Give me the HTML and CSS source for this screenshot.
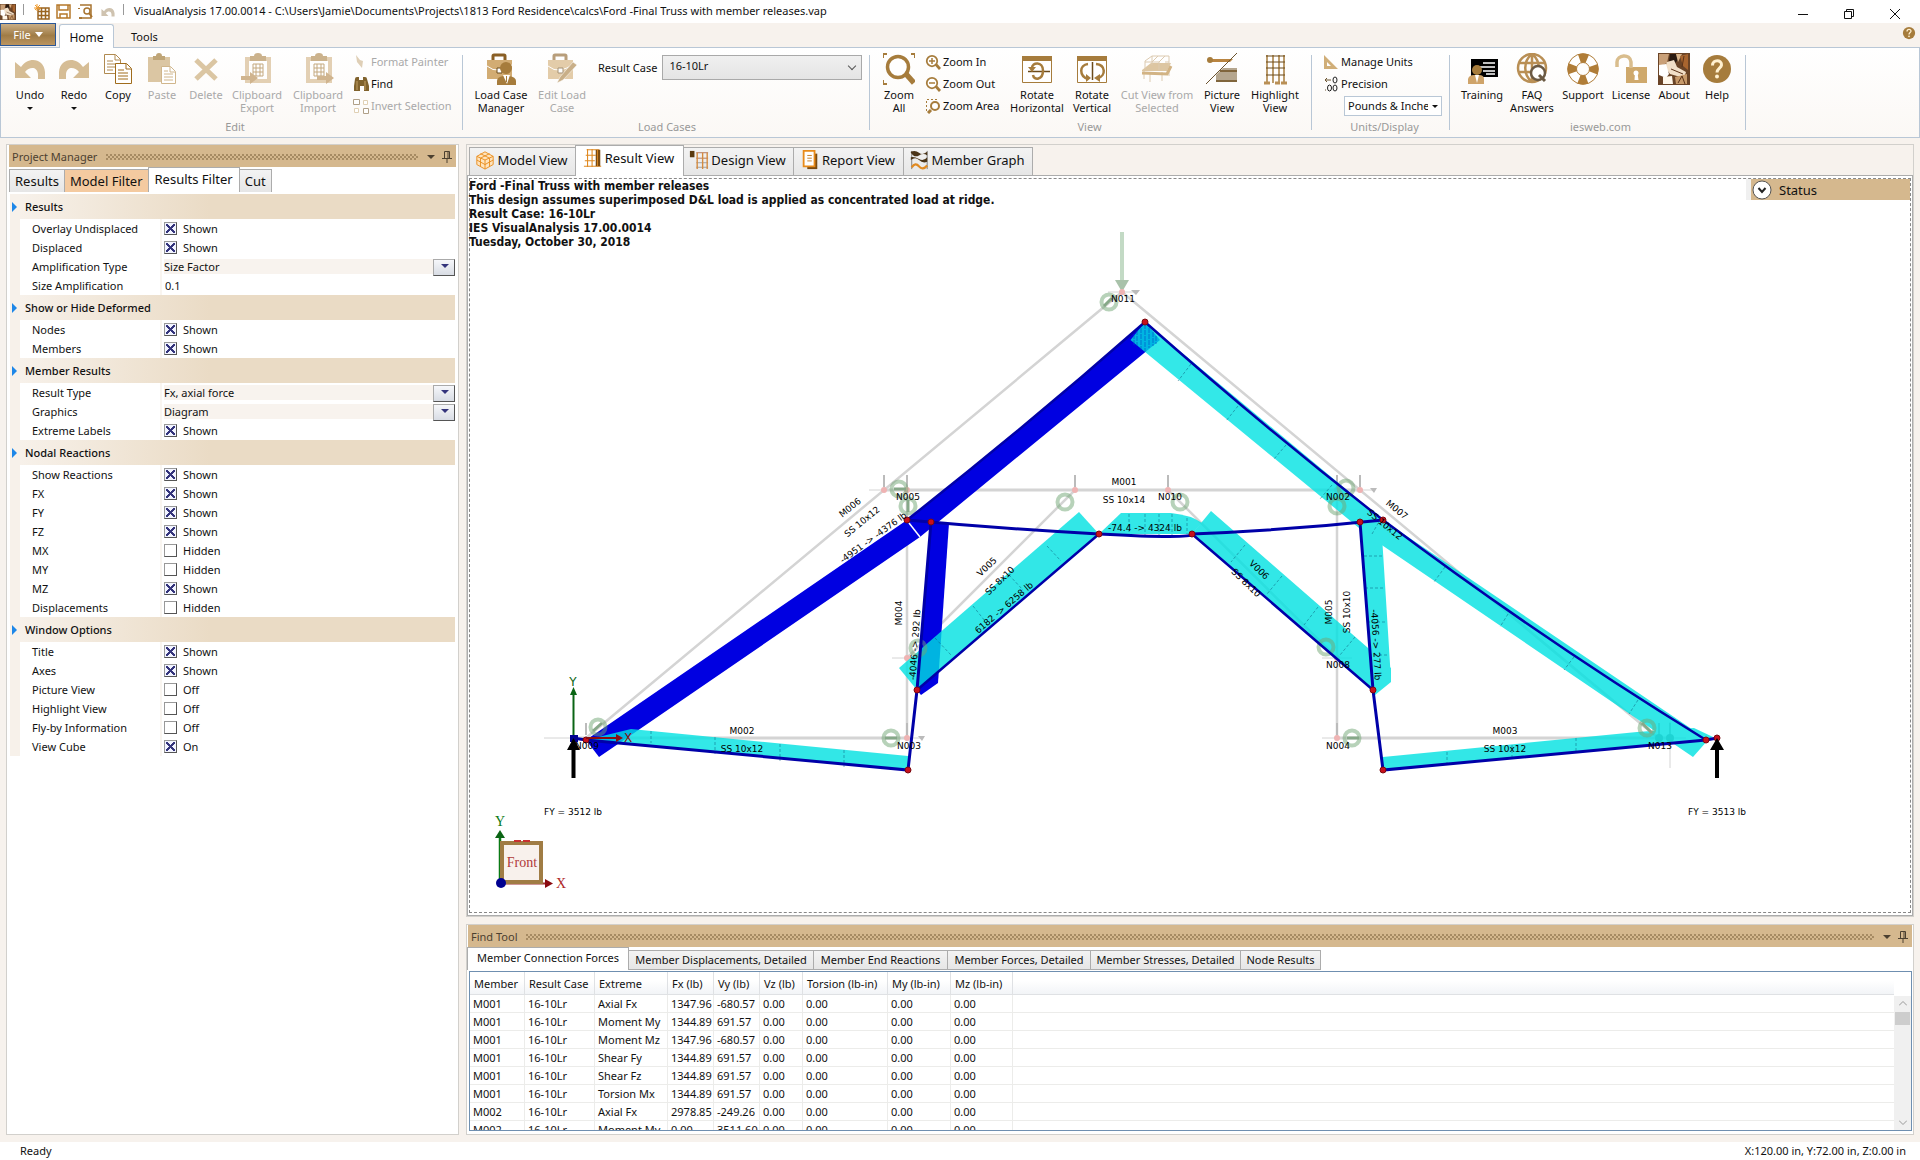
FILE: index.html
```html
<!DOCTYPE html>
<html lang="en">
<head>
<meta charset="utf-8">
<title>VisualAnalysis 17.00.0014</title>
<link rel="stylesheet" href="styles.css">
</head>
<body>
<svg class="defs" aria-hidden="true">
  <defs>
    <symbol id="i-undo" viewBox="0 0 32 32"><path d="M1 9v16h16l-6-6c4-5 12-6 13 2v5h7v-7C30 5 14 3 7 14z"/></symbol>
    <symbol id="i-clip" viewBox="0 0 32 32"><path d="M4 4h26v26H4z" fill="#d6b98e"/><path d="M8 8h18v18H8z" fill="#fff"/><path d="M9 3h4a4 3 0 0 1 8 0h4v5H9z" fill="#b08a50"/><path d="M12 11h10v12H12zM15 11v12M19 11v12M12 15h10M12 19h10" fill="none" stroke="#a67c3c"/></symbol>
    <symbol id="i-case" viewBox="0 0 32 32"><path d="M8 7V3q0-1 1-1h10q1 0 1 1v4" fill="none" stroke="#8a5f25" stroke-width="3"/><path d="M2 7h25v19H2z" fill="#d2ac73"/><path d="M2 13q6 5 12 4t13-5" fill="none" stroke="#fff"/><path d="M12 15h5v5h-5z" fill="#fff" stroke="#6b4a1a"/></symbol>
    <symbol id="i-mag" viewBox="0 0 32 32"><circle cx="14" cy="14" r="10.500" fill="#fff" stroke="#a67c3c" stroke-width="3.500"/><path d="M22 21l8 9" stroke="#a67c3c" stroke-width="5.500"/></symbol>
    <symbol id="i-help" viewBox="0 0 32 32"><circle cx="16" cy="16" r="14" fill="#a67c3c"/><path d="M11.500 12.500C11.500 6 21 6.500 20.500 12c-.3 3-4.500 3.500-4.500 7.500" fill="none" stroke="#fff0cf" stroke-width="3"/><circle cx="16" cy="23.500" r="2" fill="#fff0cf"/></symbol>
    <symbol id="i-pin" viewBox="0 0 10 12"><path d="M2.500 7V.5h5V7M6 1v6M0 7.500h10M5 8v4" fill="none" stroke="#4c4030"/></symbol>
    <symbol id="i-photo" viewBox="0 0 32 32"><path d="M0 0h32v32H0z" fill="#6a4427"/><path d="M1 1h10l-2 9-8 4z" fill="#c9a078"/><path d="M12 1h6l2 6-4 4-5-3z" fill="#2a1a10"/><path d="M18 1h6l-4 8z" fill="#d9b48a"/><path d="M9 9l7-2 3 7 9 5-2 6-14-4-5-7z" fill="#f1dfc8"/><path d="M1 12l7-1 3 10-3 4-7-3z" fill="#fff"/><path d="M22 3l8-2v16l-5-4z" fill="#a8652f"/><path d="M5 24l9-1 1 8H5z" fill="#fff7ea"/><path d="M17 24l12-3v10H18z" fill="#c79a6a"/><path d="M20 30l4-7 3 8M13 16l12 5M26 3l-2 11" stroke="#5a3218" fill="none"/></symbol>
  </defs>
</svg>

<header class="titlebar">
  <svg class="app-icon"><use href="#i-photo"/></svg>
  <span class="tick"></span>
  <svg width="16" height="16" viewBox="0 0 16 16"><path d="M4 4h11v11H4zM7.500 4v11M11.500 4v11M4 7.500h11M4 11.500h11" fill="none" stroke="#9a6420" stroke-width="1.500"/><path d="M0 4h7M3 0v7M1 1l5 5M6 1L1 6" stroke="#f09a2c"/></svg>
  <svg width="16" height="16" viewBox="0 0 16 16"><path d="M1 1h13v13H1zM3 1v5h9V1M4 14v-4h7v4" fill="none" stroke="#b5782a" stroke-width="1.500"/></svg>
  <svg width="16" height="16" viewBox="0 0 16 16"><path d="M2 1h11v13H2" fill="none" stroke="#a87430" stroke-width="1.500"/><circle cx="9" cy="7" r="3" fill="#fff" stroke="#a87430" stroke-width="1.500"/><path d="M11 9l3 4M1 4v1M1 14h3" stroke="#a87430" stroke-width="2"/></svg>
  <svg class="faded" width="16" height="14"><use href="#i-undo"/></svg>
  <span class="tick"></span>
  <h1>VisualAnalysis 17.00.0014 - C:\Users\Jamie\Documents\Projects\1813 Ford Residence\calcs\Ford -Final Truss with member releases.vap</h1>
  <div class="win">
    <button aria-label="Minimize"><svg width="10" height="10" viewBox="0 0 10 10"><path d="M0 5.500h10"/></svg></button>
    <button aria-label="Restore"><svg width="10" height="10" viewBox="0 0 10 10"><path d="M.5 2.500h7v7h-7zM2.500 2V.5h7v7H8"/></svg></button>
    <button aria-label="Close"><svg width="10" height="10" viewBox="0 0 10 10"><path d="M0 0l10 10M10 0L0 10"/></svg></button>
  </div>
</header>

<nav class="menu">
  <button class="file">File <i></i></button>
  <button class="home">Home</button>
  <button class="tools">Tools</button>
  <button class="mini-help" aria-label="Help"><svg width="14" height="14"><use href="#i-help"/></svg></button>
</nav>

<section class="ribbon">
  <div class="group g-edit">
    <div class="items">
      <button class="big w44"><svg class="tan"><use href="#i-undo"/></svg>Undo<i class="caret"></i></button>
      <button class="big w44"><svg class="tan flip"><use href="#i-undo"/></svg>Redo<i class="caret"></i></button>
      <button class="big w44"><svg viewBox="0 0 32 32"><g fill="#fff" stroke="#b08a50"><path d="M2.500 1.500h11l5 5v14h-16z"/><path d="M13 2v5h5M5 8h6M5 11h10M5 14h10M5 17h6"/><path d="M13.500 10.500h11l5 5v15h-16z" stroke="#a06c1c"/><path d="M24 11v5h5M16 17h6M16 20h10M16 23h10M16 26h10" stroke="#a06c1c"/></g></svg>Copy</button>
      <button class="big w44" disabled><svg viewBox="0 0 32 32"><path d="M2 4h22v25H2z" fill="#dbc6a3"/><path d="M7 3h3a3 3 0 0 1 6 0h3v4H7z" fill="#bfa577"/><path d="M15.500 13.500h9l5 5v12h-14z" fill="#fff" stroke="#d0b68c"/><path d="M24 14v5h5M18 18h4M18 21h9M18 24h9M18 27h9" fill="none" stroke="#d0b68c"/></svg>Paste</button>
      <button class="big w44" disabled><svg viewBox="0 0 32 32"><path d="M6 7l20 19M26 7L6 26" stroke="#dbc6a3" stroke-width="5"/></svg>Delete</button>
      <button class="big w58" disabled><svg viewBox="0 0 32 32"><g opacity=".65"><use href="#i-clip"/><path d="M0 23h9v-4l8 6-8 6v-4H0z" fill="#b98f55"/></g></svg>Clipboard<br>Export</button>
      <button class="big w64" disabled><svg viewBox="0 0 32 32"><g opacity=".65"><use href="#i-clip"/><path d="M15 23h9v-4l8 6-8 6v-4h-9z" fill="#b98f55"/></g></svg>Clipboard<br>Import</button>
      <div class="stack">
        <button class="small" disabled><svg viewBox="0 0 16 16"><path d="M3 1l4 5 3 1-1 7-5-6z" fill="#dfcfb6"/></svg>Format Painter</button>
        <button class="small"><svg viewBox="0 0 16 16"><path d="M2 3q0-2 2-2h2v3h4V1h2q2 0 2 2l2 7v5h-5v-5H7v5H1v-5z" fill="#80622c"/><path d="M4 5v9M12 5v9" stroke="#c3a064"/></svg>Find</button>
        <button class="small" disabled><svg viewBox="0 0 16 16"><g fill="#fff"><path d="M.5 1.500h6v5h-6zM10.500 10.500h5v5h-5z" stroke="#b0a088"/><path d="M10.500 2.500h4v4h-4zM1.500 10.500h4v4h-4z" stroke="#e0d0b4"/></g></svg>Invert Selection</button>
      </div>
    </div>
    <div class="caption">Edit</div>
  </div>
  <div class="group g-load">
    <div class="items">
      <button class="big w60"><svg viewBox="0 0 32 32"><use href="#i-case"/><path d="M12 32v-4q0-4 6-5h6q7 1 7 5v4z" fill="#a67c3c"/><circle cx="21" cy="15" r="6" fill="#a67c3c"/><path d="M18 22h7l-3 9z" fill="#fff"/><path d="M21 23h1v6h-1z" fill="#a67c3c"/></svg>Load Case<br>Manager</button>
      <button class="big w62" disabled><svg viewBox="0 0 32 32"><g opacity=".6"><use href="#i-case"/><path d="M11 30l3-6L27 9l4 3-14 15z" fill="#a67c3c" stroke="#fff" stroke-width=".5"/></g></svg>Edit Load<br>Case</button>
      <div class="field"><label for="rc">Result Case</label><select id="rc"><option>16-10Lr</option></select></div>
    </div>
    <div class="caption">Load Cases</div>
  </div>
  <div class="group g-view">
    <div class="items">
      <button class="big w44"><svg viewBox="0 0 32 32"><use href="#i-mag" x="1" y="0"/><path d="M0 5V1h4M28 1h4v4M0 27v4h4" fill="none" stroke="#a67c3c" stroke-width="2"/></svg>Zoom<br>All</button>
      <div class="stack w84">
        <button class="small"><svg viewBox="0 0 32 32"><use href="#i-mag"/><path d="M8 14h12M14 8v12" stroke="#a67c3c" stroke-width="3"/></svg>Zoom In</button>
        <button class="small"><svg viewBox="0 0 32 32"><use href="#i-mag"/><path d="M8 14h12" stroke="#a67c3c" stroke-width="3"/></svg>Zoom Out</button>
        <button class="small"><svg viewBox="0 0 16 16"><circle cx="10" cy="8" r="4" fill="#fff" stroke="#a67c3c" stroke-width="2"/><path d="M6 12l-3 3" stroke="#a67c3c" stroke-width="3"/><path d="M1.500 13V1.500H14" fill="none" stroke="#a67c3c" stroke-dasharray="2 2"/></svg>Zoom Area</button>
      </div>
      <button class="big w58"><svg viewBox="0 0 32 32"><path d="M1.500 3.500h29v26h-29z" fill="#fff" stroke="#a67c3c"/><path d="M1 3h30v5H1z" fill="#a67c3c"/><path d="M7 18.500h22" stroke="#6b4a1a" stroke-width="1.500"/><path d="M11 15c0-6 11-7 11 2.500S13 28 12 22" fill="none" stroke="#a67c3c" stroke-width="2.500"/><path d="M7 14h8l-4 5z" fill="#a67c3c"/></svg>Rotate<br>Horizontal</button>
      <button class="big w52"><svg viewBox="0 0 32 32"><path d="M1.500 3.500h29v26h-29z" fill="#fff" stroke="#a67c3c"/><path d="M1 3h30v5H1z" fill="#a67c3c"/><path d="M16.500 9v18" stroke="#6b4a1a" stroke-width="1.500"/><path d="M12 26C3 23 3 12 12 11M20 11c10 1 10 12 2 14" fill="none" stroke="#a67c3c" stroke-width="2.500"/><path d="M10 21v8l5-4zM24 21v8l-6-4z" fill="#a67c3c"/></svg>Rotate<br>Vertical</button>
      <button class="big w78" disabled><svg viewBox="0 0 32 32"><path d="M1 17l9-7h20l-4 8H1z" fill="#ddc6a2"/><path d="M4 16V8l7-5h17v9M11 3v9M17 3l-6 6H4M24 3l-6 6h-7M18 9v8M24 9h4M3 18v8M9 20v9M21 19v9M28 14v9" fill="none" stroke="#dccab0"/><path d="M1 20l25 1 4-8" fill="none" stroke="#d2b384" stroke-width="3"/></svg>Cut View from<br>Selected</button>
      <button class="big w52"><svg viewBox="0 0 32 32"><path d="M3 6h24l-3 3H3z" fill="#b98440"/><circle cx="4" cy="7" r="3" fill="#a67c3c"/><path d="M10 29V22l7-7h14v14z" fill="#b5a68e"/><path d="M14 18h17M10 28h21" stroke="#80653c" stroke-width="2"/><path d="M0 31L31 0" stroke="#6b5430"/></svg>Picture<br>View</button>
      <button class="big w54"><svg viewBox="0 0 32 32"><path d="M8 2v28M14 2v28M20 2v28M25 2v28" stroke="#a67c3c" stroke-width="1.500"/><path d="M7 3h19M7 9h19M7 15h19M7 22h19" stroke="#6b4a1a"/><path d="M5 30h6M16 30h5M22 30h6" stroke="#b98f55" stroke-width="3"/></svg>Highlight<br>View</button>
    </div>
    <div class="caption">View</div>
  </div>
  <div class="group g-units">
    <div class="items">
      <div class="stack">
        <button class="small"><svg viewBox="0 0 16 16"><path d="M1 1l14 14H1zM4 8v4h4z" fill="#d0ae78" fill-rule="evenodd"/></svg>Manage Units</button>
        <button class="small"><svg viewBox="0 0 16 16"><path d="M2 4h6M4 2L2 4l2 2M2 14h1" fill="none" stroke="#6b5430"/><g fill="none" stroke="#222"><ellipse cx="12" cy="4" rx="2" ry="3"/><ellipse cx="6.500" cy="12" rx="2" ry="3"/><ellipse cx="12" cy="12" rx="2" ry="3"/></g></svg>Precision</button>
        <span class="units"><select aria-label="Units"><option>Pounds &amp; Inches</option></select></span>
      </div>
    </div>
    <div class="caption">Units/Display</div>
  </div>
  <div class="group g-web">
    <div class="items">
      <button class="big w52"><svg viewBox="0 0 32 32"><path d="M5 6h27v18H5z"/><path d="M17 10h12M13 14h16M17 18h12M20 21h9" stroke="#fff" stroke-width="1.500"/><circle cx="11" cy="17" r="5" fill="#a67c3c"/><path d="M2 31v-5q1-4 6-4h5q5 0 5 4v5z" fill="#cfa46a"/><path d="M9 22h4l-2 8z" fill="#fff"/></svg>Training</button>
      <button class="big w48"><svg viewBox="0 0 32 32"><g fill="none" stroke="#b98f55" stroke-width="2.500"><circle cx="16" cy="15" r="14"/><path d="M3 10h26M2 19h27M16 1v28M16 1c-9 7-9 21 0 28M16 1c9 7 9 21 0 28"/></g><circle cx="22" cy="20" r="7" fill="#fff" stroke="#6b5a44" stroke-width="2.500"/><path d="M23 22l6 6" stroke="#6b5a44" stroke-width="3"/></svg>FAQ<br>Answers</button>
      <button class="big w54"><svg viewBox="0 0 32 32"><circle cx="16" cy="16" r="11" fill="none" stroke="#fff" stroke-width="9"/><circle cx="16" cy="16" r="11" fill="none" stroke="#b07d38" stroke-width="9" stroke-dasharray="8 9.280" stroke-dashoffset="4"/><circle cx="16" cy="16" r="15.300" fill="none" stroke="#b07d38"/><circle cx="16" cy="16" r="6.500" fill="none" stroke="#b07d38"/></svg>Support</button>
      <button class="big w42"><svg viewBox="0 0 32 32"><path d="M11 14h21v16H11z" fill="#cfa96c"/><path d="M2 14V9c0-7 13-9 14 0v6" fill="none" stroke="#d9bd8d" stroke-width="3.500"/><circle cx="21" cy="20" r="2.500" fill="#fff"/><path d="M20 20h2.500l1 7h-4z" fill="#fff"/></svg>License</button>
      <button class="big w44"><svg viewBox="0 0 32 32"><use href="#i-photo"/></svg>About</button>
      <button class="big w42"><svg viewBox="0 0 32 32"><use href="#i-help"/></svg>Help</button>
    </div>
    <div class="caption">iesweb.com</div>
  </div>
</section>

<main class="work">
  <aside class="pane side">
    <div class="pane-head"><span>Project Manager</span><i class="dots"></i><i class="down"></i><svg width="10" height="12"><use href="#i-pin"/></svg></div>
    <div class="tabs side-tabs"><button>Results</button><button class="peach">Model Filter</button><button class="on">Results Filter</button><button>Cut</button></div>
    <form class="props">
      <h2>Results</h2>
      <div class="row"><label for="p1">Overlay Undisplaced</label><span><input type="checkbox" id="p1" checked>Shown</span></div>
      <div class="row"><label for="p2">Displaced</label><span><input type="checkbox" id="p2" checked>Shown</span></div>
      <div class="row"><label for="p3">Amplification Type</label><span class="pick"><select id="p3"><option>Size Factor</option></select></span></div>
      <div class="row"><label for="p4">Size Amplification</label><span><input type="text" id="p4" value="0.1"></span></div>
      <h2>Show or Hide Deformed</h2>
      <div class="row"><label for="p5">Nodes</label><span><input type="checkbox" id="p5" checked>Shown</span></div>
      <div class="row"><label for="p6">Members</label><span><input type="checkbox" id="p6" checked>Shown</span></div>
      <h2>Member Results</h2>
      <div class="row"><label for="p7">Result Type</label><span class="pick"><select id="p7"><option>Fx, axial force</option></select></span></div>
      <div class="row"><label for="p8">Graphics</label><span class="pick"><select id="p8"><option>Diagram</option></select></span></div>
      <div class="row"><label for="p9">Extreme Labels</label><span><input type="checkbox" id="p9" checked>Shown</span></div>
      <h2>Nodal Reactions</h2>
      <div class="row"><label for="p10">Show Reactions</label><span><input type="checkbox" id="p10" checked>Shown</span></div>
      <div class="row"><label for="p11">FX</label><span><input type="checkbox" id="p11" checked>Shown</span></div>
      <div class="row"><label for="p12">FY</label><span><input type="checkbox" id="p12" checked>Shown</span></div>
      <div class="row"><label for="p13">FZ</label><span><input type="checkbox" id="p13" checked>Shown</span></div>
      <div class="row"><label for="p14">MX</label><span><input type="checkbox" id="p14">Hidden</span></div>
      <div class="row"><label for="p15">MY</label><span><input type="checkbox" id="p15">Hidden</span></div>
      <div class="row"><label for="p16">MZ</label><span><input type="checkbox" id="p16" checked>Shown</span></div>
      <div class="row"><label for="p17">Displacements</label><span><input type="checkbox" id="p17">Hidden</span></div>
      <h2>Window Options</h2>
      <div class="row"><label for="p18">Title</label><span><input type="checkbox" id="p18" checked>Shown</span></div>
      <div class="row"><label for="p19">Axes</label><span><input type="checkbox" id="p19" checked>Shown</span></div>
      <div class="row"><label for="p20">Picture View</label><span><input type="checkbox" id="p20">Off</span></div>
      <div class="row"><label for="p21">Highlight View</label><span><input type="checkbox" id="p21">Off</span></div>
      <div class="row"><label for="p22">Fly-by Information</label><span><input type="checkbox" id="p22">Off</span></div>
      <div class="row"><label for="p23">View Cube</label><span><input type="checkbox" id="p23" checked>On</span></div>
    </form>
  </aside>

  <section class="pane viewer">
    <div class="tabs view-tabs">
      <button class="v1"><svg viewBox="0 0 22 22"><path d="M11 2l9 5v9l-9 5-9-5V7z" fill="#ffe4bd" stroke="#e88b1a"/><path d="M2 7l9 4 9-4M11 11v10M6 4l10 5v9M16 4L6 9v9M2 11l9 5 9-5" fill="none" stroke="#e88b1a"/></svg>Model View</button>
      <button class="on v2"><svg viewBox="0 0 22 22"><path d="M5 1v20M10 1v20M1 20h19M4 2h14M3 8h11M2 14h11" fill="none" stroke="#e08a22" stroke-width="1.200"/><path d="M14 2h5v18h-5z" fill="#7a4a10"/><path d="M16 2v18" stroke="#e08a22"/></svg>Result View</button>
      <button class="v3"><svg viewBox="0 0 22 22"><path d="M1 1h5v7H1z" fill="#5a3a10"/><path d="M8 3h13M8 9h13" stroke="#b07050"/><path d="M8 14h13M8 19h13" stroke="#999"/><path d="M9 3v18M15 3v18M20 3v18" stroke="#d58a3c" stroke-width="1.500"/></svg>Design View</button>
      <button class="v4"><svg viewBox="0 0 22 22"><path d="M8 4h11v17H8z" fill="#7a4a10"/><path d="M4 1h12v17H4z" fill="#fff" stroke="#e88b1a" stroke-width="2"/><path d="M8 6h5M8 9h5M8 12h5" stroke="#c07820"/></svg>Report View</button>
      <button class="v5"><svg viewBox="0 0 22 22"><path d="M3 1v20M20 1v20" stroke="#777"/><path d="M2 3q4 6 9 3t9 0V2q-5 4-9 1T2 2zM2 11q5-4 9 0t9 2v-5q-4 5-9 2t-9-2z" fill="#4a3418"/><path d="M3 19q4-6 8-1t9-1" fill="none" stroke="#e08a22" stroke-width="2.500"/></svg>Member Graph</button>
    </div>
    <div class="frame">
      <div class="canvas">
        <svg class="model" viewBox="472 179 1436 733" preserveAspectRatio="xMidYMid meet" role="img" aria-label="Truss axial force diagram">
          <g fill="none" stroke="#d4d4d4" stroke-width="2.500">
            <path d="M586 738L1122 292 1658 738M907 490v248M1337 490v248M1075 490L907 658M1168 490l169 168"/>
            <path d="M884 490h476M573 738h334M1337 738h334" stroke-width="3"/>
            <path d="M869 490h505M544 738h378M1322 738h364M892 658h30M1322 658h30M1108 292h28M1670 722v46" stroke-width="1"/>
            <path d="M884 475v12M907 475v12M1075 475v12M1168 475v12M1337 475v12M1360 475v12M586 723v12M907 723v12M1337 723v12M1659 723v12M1670 723v12" stroke="#bbb" stroke-width="2"/>
          </g>
          <path d="M1131 290h9l-4 5zM918 736h7l-3 5zM1370 488h7l-3 5z" fill="#bbb"/>
          <path d="M1122 232v50" stroke="#c3dac5" stroke-width="4"/>
          <path d="M1115 280h14l-7 12z" fill="#a9c2aa"/>
          <g fill="#efb3b3"><circle cx="1122" cy="292" r="3"/><circle cx="884" cy="490" r="3"/><circle cx="907" cy="490" r="3"/><circle cx="1075" cy="490" r="3"/><circle cx="1168" cy="490" r="3"/><circle cx="1337" cy="490" r="3"/><circle cx="1360" cy="490" r="3"/><circle cx="907" cy="658" r="3"/><circle cx="907" cy="738" r="3"/><circle cx="1337" cy="738" r="3"/><circle cx="1337" cy="658" r="3"/><circle cx="1659" cy="738" r="4" fill="#999"/><circle cx="1670" cy="738" r="4" fill="#999"/></g>
          <g fill="#0000e1">
            <path d="M1145 322Q1028 425 907 520L586 740 599 757 920 537 1160 340z"/>
            <path d="M931 522l18 1-11 160-17 12-4-5z"/>
          </g>
          <path d="M909 523l11 14" stroke="#fff" stroke-width="1.500"/>
          <g fill="#00e2e2" opacity=".8">
            <path d="M1145 322l238 198 325 220-15 17L1370 537 1130.500 340z"/>
            <path d="M1099 534l-20-22L899 668l18 22z"/>
            <path d="M1192 534l19-23 180 157v14l-16 13-2-5z"/>
            <path d="M1360 522l21-2 10 160-18 10z"/>
            <path d="M1099 534l22-21h50q20 2 31 10l-10 11z"/>
            <path d="M586 740l45-11 277 27v14z"/>
            <path d="M1383 770v-13l254-25 57-4 19 9-7 3z"/>
          </g>
          <g fill="none" stroke="#0046c8" stroke-width=".6" stroke-dasharray="5 1"><path d="M1134 334v12M1137 330v16M1141 328v22M1145 324v28M1149 328v20M1153 332v14M1156 336v8"/></g>
          <g fill="none" stroke="#0a5a78" stroke-width=".5" stroke-dasharray="3 2">
            <path d="M1191 364l-13 17M1238 406l-12 15M1286 445l-12 14M1332 485l-12 14M1445 567l-11 15M1508 614l-8 13M1574 657l-10 13M1638 700l-9 14"/>
            <path d="M651 731v12M715 737v17M780 744v17M844 750v17M1447 752v14M1512 745v14M1576 738v14"/>
            <path d="M1009 575l14 15M973 606l12 15M935 638l16 17M1047 546l14 15M1245 545l-14 17M1282 576l-15 18M1318 607l-14 18M1355 637l-15 18"/>
            <path d="M1364 556h19M1365 588h18M1367 622h20M1369 655h20M1129 514v21M1145 514v22M1159 514v21M1172 514v21M1187 518v16M1372 534l8-14"/>
          </g>
          <g fill="none" stroke="#6fa573" stroke-opacity=".5" stroke-width="4"><circle cx="1109" cy="302" r="7.500"/><circle cx="899" cy="489" r="7.500"/><circle cx="908" cy="506" r="7.500"/><circle cx="1065" cy="502" r="7.500"/><circle cx="1180" cy="502" r="7.500"/><circle cx="1346" cy="488" r="7.500"/><circle cx="1337" cy="506" r="7.500"/><circle cx="918" cy="648" r="7.500"/><circle cx="598" cy="727" r="7.500"/><circle cx="891" cy="738" r="7.500"/><circle cx="1326" cy="647" r="7.500"/><circle cx="1352" cy="738" r="7.500"/><circle cx="1647" cy="728" r="7.500"/></g>
          <path d="M1104 306l8-8M894 489h12M908 500v12M885 738h12M1347 738h12M1642 723l10 10M593 731l9-8" stroke="#86a888" stroke-width="3"/>
          <g fill="none" stroke="#0000a8" stroke-width="3">
            <path d="M907 520Q1005 529 1099 534T1192 534Q1290 530 1383 520"/>
            <path d="M573 738l13 2 322 30 9-80 14-168M1717 738l-11 2-323 30-10-80-13-168"/>
            <path d="M1145 322Q1266 429 1383 520 1540 638 1706 740M917 690l182-156M1192 534l181 156M1145 322Q1028 425 907 520" stroke-width="2.500"/>
          </g>
          <g fill="#c8101c" stroke="#7a0a10"><circle cx="1145" cy="322" r="3"/><circle cx="907" cy="520" r="3"/><circle cx="931" cy="522" r="3"/><circle cx="1099" cy="534" r="3"/><circle cx="1192" cy="534" r="3"/><circle cx="1360" cy="522" r="3"/><circle cx="1383" cy="520" r="3"/><circle cx="917" cy="690" r="3"/><circle cx="1373" cy="690" r="3"/><circle cx="908" cy="770" r="3"/><circle cx="1383" cy="770" r="3"/><circle cx="586" cy="740" r="3"/><circle cx="1706" cy="740" r="3"/><circle cx="1717" cy="738" r="3"/></g>
          <path d="M573.500 737v-42" stroke="#0a6414" stroke-width="2"/><path d="M570 695l3.500-8 3.500 8z" fill="#0a6414"/>
          <path d="M586 738h32" stroke="#8a0a10" stroke-width="2"/><path d="M616 734l7 4-7 4z" fill="#8a0a10"/>
          <path d="M570 735h8v7h-8z" fill="#000090"/>
          <path d="M573.500 778v-30M1717 778v-30" stroke="#000" stroke-width="4"/><path d="M567 750l6.500-12 6.500 12zM1710 750l7-12 7 12z"/>
          <g class="lbl">
            <text x="1123" y="302">N011</text><text x="908" y="500">N005</text><text x="1124" y="485">M001</text><text x="1124" y="503">SS 10x14</text><text x="1170" y="500">N010</text><text x="1338" y="500">N002</text><text x="1145" y="531">-74.4 -&gt; 4324 lb</text>
            <text x="587" y="749">N009</text><text x="742" y="734">M002</text><text x="742" y="752">SS 10x12</text><text x="909" y="749">N003</text><text x="1338" y="668">N008</text><text x="1338" y="749">N004</text><text x="1505" y="734">M003</text><text x="1505" y="752">SS 10x12</text><text x="1660" y="749">N013</text>
            <text x="573" y="815">FY = 3512 lb</text><text x="1717" y="815">FY = 3513 lb</text>
            <text transform="translate(852 510) rotate(-39)">M006</text><text transform="translate(864 524) rotate(-39)">SS 10x12</text><text transform="translate(875 540) rotate(-36)">-4951 -&gt; -4376 lb</text>
            <text transform="translate(989 569) rotate(-44)">V005</text><text transform="translate(1002 583) rotate(-44)">SS 8x10</text><text transform="translate(1006 610) rotate(-41)">6182 -&gt; 6258 lb</text>
            <text transform="translate(1257 572) rotate(44)">V006</text><text transform="translate(1244 585) rotate(44)">SS 8x10</text>
            <text transform="translate(1395 512) rotate(39)">M007</text><text transform="translate(1383 527) rotate(39)">SS 10x12</text>
            <text transform="translate(902 613) rotate(-90)">M004</text><text transform="translate(918 645) rotate(-86)">-4046 -&gt; 292 lb</text>
            <text transform="translate(1332 612) rotate(-90)">M005</text><text transform="translate(1350 612) rotate(-90)">SS 10x10</text><text transform="translate(1373 645) rotate(87)">-4056 -&gt; 277 lb</text>
          </g>
          <g class="axis"><text x="573" y="686" fill="#0a6414">Y</text><text x="628" y="742" fill="#8a0a10">X</text></g>
          <g class="cube">
            <path d="M500 880v-46" stroke="#0a7a14" stroke-width="2.500"/><path d="M495 838l5-8 5 8z" fill="#0a6414"/>
            <path d="M504 883.500h42" stroke="#a03030" stroke-width="2"/><path d="M545 879v9l8-4.500z" fill="#8a0a10"/>
            <path d="M502 843h39v39h-39z" fill="#f8f1ec" stroke="#a07c44" stroke-width="4"/>
            <path d="M514 841h7M523 841h7" stroke="#c83030" stroke-width="2"/>
            <circle cx="501" cy="883" r="5" fill="#000090"/>
            <text x="500" y="826" fill="#0a7a14">Y</text><text x="561" y="888" fill="#b02828">X</text><text x="522" y="867" fill="#b03a3a">Front</text>
          </g>
        </svg>
        <p class="notes">Ford -Final Truss with member releases<br>This design assumes superimposed D&amp;L load is applied as concentrated load at ridge.<br>Result Case: 16-10Lr<br>IES VisualAnalysis 17.00.0014<br>Tuesday, October 30, 2018</p>
        <button class="status"><svg width="20" height="20" viewBox="0 0 20 20"><circle cx="10" cy="10" r="9" fill="#fff" stroke="#555"/><path d="M6.500 8l3.500 4 3.500-4" fill="none" stroke="#222" stroke-width="2"/></svg>Status</button>
      </div>
    </div>
  </section>

  <section class="pane finder">
    <div class="pane-head"><span>Find Tool</span><i class="dots"></i><i class="down"></i><svg width="10" height="12"><use href="#i-pin"/></svg></div>
    <div class="tabs find-tabs"><button class="on f1">Member Connection Forces</button><button class="f2">Member Displacements, Detailed</button><button class="f3">Member End Reactions</button><button class="f4">Member Forces, Detailed</button><button class="f5">Member Stresses, Detailed</button><button class="f6">Node Results</button></div>
    <div class="grid">
      <table>
        <colgroup><col class="c1"><col class="c2"><col class="c3"><col class="c4"><col class="c4"><col class="c5"><col class="c6"><col class="c7"><col class="c8"><col></colgroup>
        <thead><tr><th>Member</th><th>Result Case</th><th>Extreme</th><th>Fx (lb)</th><th>Vy (lb)</th><th>Vz (lb)</th><th>Torsion (lb-in)</th><th>My (lb-in)</th><th>Mz (lb-in)</th><th></th></tr></thead>
        <tbody>
          <tr><td>M001</td><td>16-10Lr</td><td>Axial Fx</td><td>1347.96</td><td>-680.57</td><td>0.00</td><td>0.00</td><td>0.00</td><td>0.00</td><td></td></tr>
          <tr><td>M001</td><td>16-10Lr</td><td>Moment My</td><td>1344.89</td><td>691.57</td><td>0.00</td><td>0.00</td><td>0.00</td><td>0.00</td><td></td></tr>
          <tr><td>M001</td><td>16-10Lr</td><td>Moment Mz</td><td>1347.96</td><td>-680.57</td><td>0.00</td><td>0.00</td><td>0.00</td><td>0.00</td><td></td></tr>
          <tr><td>M001</td><td>16-10Lr</td><td>Shear Fy</td><td>1344.89</td><td>691.57</td><td>0.00</td><td>0.00</td><td>0.00</td><td>0.00</td><td></td></tr>
          <tr><td>M001</td><td>16-10Lr</td><td>Shear Fz</td><td>1344.89</td><td>691.57</td><td>0.00</td><td>0.00</td><td>0.00</td><td>0.00</td><td></td></tr>
          <tr><td>M001</td><td>16-10Lr</td><td>Torsion Mx</td><td>1344.89</td><td>691.57</td><td>0.00</td><td>0.00</td><td>0.00</td><td>0.00</td><td></td></tr>
          <tr><td>M002</td><td>16-10Lr</td><td>Axial Fx</td><td>2978.85</td><td>-249.26</td><td>0.00</td><td>0.00</td><td>0.00</td><td>0.00</td><td></td></tr>
          <tr><td>M002</td><td>16-10Lr</td><td>Moment My</td><td>0.00</td><td>3511.60</td><td>0.00</td><td>0.00</td><td>0.00</td><td>0.00</td><td></td></tr>
        </tbody>
      </table>
      <div class="scroll" aria-hidden="true">
        <svg width="8" height="5" viewBox="0 0 8 5"><path d="M0 4.500l4-4 4 4"/></svg><i></i><svg width="8" height="5" viewBox="0 0 8 5"><path d="M0 .5l4 4 4-4"/></svg>
      </div>
    </div>
  </section>
</main>

<footer class="statusbar"><span>Ready</span><span>X:120.00 in, Y:72.00 in, Z:0.00 in</span></footer>
</body>
</html>
```
FILE: styles.css
```css
* { box-sizing: border-box; }
body {
  margin: 0;
  height: 100vh;
  display: flex;
  flex-direction: column;
  background: #f7f2ed;
  color: #111;
  font: 11px/14px "Noto Sans", "Open Sans", sans-serif;
  overflow: hidden;
}
button, input, select { font: inherit; color: inherit; margin: 0; padding: 0; border: 0; background: none; border-radius: 0; }
i { font-style: normal; }
svg { flex: none; display: block; }
.defs { position: absolute; width: 0; height: 0; }

.titlebar { display: flex; align-items: center; height: 23px; background: #fff; gap: 6px; flex: none; padding-right: 2px; }
.titlebar h1 { margin: 0; padding-bottom: 1px; font-size: 11px; font-weight: 400; white-space: nowrap; flex: 1; }
.app-icon { width: 16px; height: 16px; }
.tick { width: 1px; height: 11px; background: #999; margin: 0 4px 4px 1px; }
.titlebar .faded { fill: #cfc3b0; }
.win { display: flex; align-self: stretch; }
.win button { width: 46px; display: grid; place-items: center; padding-top: 5px; }
.win svg { fill: none; stroke: #111; }

.menu { display: flex; height: 24px; flex: none; align-items: flex-end; }
.file { width: 56px; height: 23px; margin-bottom: 1px; border: 1px solid #2b5797; background: linear-gradient(#c9ae86, #a07c46 55%, #bb9560); color: #fff; display: flex; align-items: center; justify-content: center; gap: 4px; }
.file i { border: 4px solid transparent; border-top: 5px solid #fff; border-bottom: 0; }
.home { width: 55px; height: 24px; padding-top: 2px; margin: 0 0 -1px 3px; background: #fff; border: 1px solid #b9c7d6; border-bottom: 0; border-radius: 3px 3px 0 0; font-size: 12px; z-index: 1; }
.tools { height: 23px; padding-top: 3px; margin-left: 17px; font-size: 11px; }
.mini-help { margin: 0 4px 7px auto; }

.ribbon { display: flex; flex: none; height: 91px; padding: 7px 0 0 1px; border: 1px solid #b9c7d6; background: linear-gradient(#fff, #fbf8f5); }
.group { height: 75px; border-right: 1px solid #b9c7d6; display: flex; flex-direction: column; }
.items { display: flex; flex: none; height: 65px; margin-top: -2px; align-items: flex-start; }
.caption { flex: none; text-align: center; color: #999; line-height: 14px; margin-top: 2px; }
.g-edit { padding-left: 6px; width: 461px; }
.g-load { padding: 0 6px 0 8px; width: 407px; }
.g-view { padding: 0 9px 0 7px; width: 442px; }
.g-units { padding-left: 8px; width: 138px; }
.g-web { padding-left: 6px; width: 296px; }
.big { display: block; text-align: center; line-height: 13px; white-space: nowrap; flex: none; }
.big > svg { width: 32px; height: 32px; margin: 0 auto 3px; }
.tan { fill: #d6bd95; }
.flip { transform: scaleX(-1); }
.caret { display: block; width: 0; margin: 6px auto 0; border: 3px solid transparent; border-top-color: #111; border-bottom: 0; }
.big:disabled, .small:disabled { color: #a9a9a9; }
.w42 { width: 42px; } .w44 { width: 44px; } .w48 { width: 48px; } .w52 { width: 52px; } .w54 { width: 54px; }
.w58 { width: 58px; } .w60 { width: 60px; } .w62 { width: 62px; } .w64 { width: 64px; } .w78 { width: 78px; }
.stack { display: flex; flex-direction: column; padding-left: 3px; margin-top: -2px; }
.stack.w84 { width: 87px; padding-left: 4px; }
.small { display: flex; align-items: center; gap: 2px; height: 22px; white-space: nowrap; }
.small svg { width: 16px; height: 16px; }
.field { display: flex; align-items: center; gap: 5px; margin: 2px 0 0 5px; position: relative; }
.field select { appearance: none; width: 200px; height: 25px; padding: 0 6px 3px; border: 1px solid #a9a9a9; background: linear-gradient(#f0f0f0, #e4e4e4); }
.field::after { content: ""; position: absolute; right: 7px; top: 8px; width: 5px; height: 5px; border: solid #555; border-width: 0 1px 1px 0; transform: rotate(45deg); }
.units { display: block; position: relative; width: 98px; height: 20px; margin: 1px 0 0 21px; }
.units select { appearance: none; width: 98px; height: 20px; padding: 0 13px 0 3px; border: 1px solid #b9c7d6; background: #fff; text-overflow: clip; }
.units::after { content: ""; position: absolute; right: 4px; top: 9px; border: 3px solid transparent; border-top-color: #111; border-bottom: 0; pointer-events: none; }

.work { flex: 1; min-height: 0; display: grid; grid-template-columns: 453px minmax(0, 1fr); grid-template-rows: minmax(0, 1fr) 211px; gap: 7px; padding: 6px 6px 7px; }
.pane { border: 1px solid #d2d0cc; display: flex; flex-direction: column; min-height: 0; min-width: 0; }
.side { grid-row: 1 / 3; background: #fff; padding: 0 2px; }
.pane-head { display: flex; align-items: center; height: 22px; flex: none; padding: 1px 4px 0 3px; gap: 9px; background: #d5b88e; color: #4c4030; }
.dots { flex: 1; height: 6px; background: radial-gradient(circle at 1px 1px, #a58a62 0 .7px, transparent 1px) 0 0 / 4px 4px, radial-gradient(circle at 1px 1px, #a58a62 0 .7px, transparent 1px) 2px 2px / 4px 4px; }
.down { border: 4px solid transparent; border-top-color: #4c4030; border-bottom: 0; margin-right: -2px; }
.tabs { display: flex; align-items: flex-end; flex: none; }
.tabs button { border: 1px solid #acacac; border-bottom: 0; background: linear-gradient(#f3f3f3, #e6e6e6); white-space: nowrap; margin-left: -1px; display: flex; align-items: center; justify-content: center; }
.tabs button:first-child { margin-left: 0; }
.tabs button.on { background: #fff; z-index: 1; }
.side-tabs { height: 25px; font-size: 13px; margin-bottom: 3px; }
.side-tabs button { height: 23px; padding: 0 5px 1px; }
.side-tabs button.on { height: 25px; padding: 0 6px 3px; }
.side-tabs .peach { background: #f4caa0; }

.props { margin: -1px 1px 0; background: linear-gradient(90deg, #f7f1ea 10px, #fff 10px); }
.props h2 { margin: 0; height: 25px; line-height: 25px; padding-left: 15px; font-size: 11px; font-weight: 500; background: linear-gradient(90deg, #f7f1ea 10px, #eadbc5 45%); position: relative; }
.props h2::before { content: ""; position: absolute; left: 2px; top: 8px; border: 5px solid transparent; border-left-color: #1e87e8; border-right: 0; }
.row { display: grid; grid-template-columns: 140px minmax(0, 1fr); height: 19px; margin-left: 10px; align-items: center; }
.row label { padding-left: 12px; }
.row > span { display: flex; align-items: center; height: 19px; padding-left: 2px; border-left: 2px solid #f9f5f0; gap: 6px; }
.row input[type=checkbox] { appearance: none; width: 13px; height: 13px; border: 1px solid #777; border-color: #999 #555 #555 #999; background: #fff; }
.row input[type=checkbox]:checked { background: linear-gradient(45deg, transparent 44%, #34347c 44% 56%, transparent 56%) center / 9px 9px no-repeat, linear-gradient(-45deg, transparent 44%, #34347c 44% 56%, transparent 56%) center / 9px 9px no-repeat, #f2f4ff; }
.row input[type=text] { width: 100%; padding-left: 1px; }
.pick { position: relative; }
.pick select { appearance: none; width: 100%; height: 15px; background: #f8f3ee; }
.pick::after { content: ""; position: absolute; right: 0; top: 2px; width: 20px; height: 15px; border: 1px solid #777; border-color: #aaa #555 #555 #aaa; background: linear-gradient(#f6f7fa, #d8dce4); pointer-events: none; }
.pick::before { content: ""; position: absolute; right: 6px; top: 7px; z-index: 1; border: 4px solid transparent; border-top-color: #34347c; border-bottom: 0; pointer-events: none; }

.view-tabs { height: 30px; padding-left: 2px; font-size: 13px; }
.view-tabs button { height: 28px; gap: 2px; padding: 0 4px 4px 2px; }
.view-tabs button.on { height: 31px; margin-bottom: -1px; padding-bottom: 7px; }
.view-tabs svg { width: 20px; height: 20px; }
.v1 { width: 107px; } .v2 { width: 109px; } .v3 { width: 111px; } .v4 { width: 111px; } .v5 { width: 130px; }
.frame { flex: 1; min-height: 0; border: 1px solid #acacac; background: #fff; padding: 2px 1px; display: flex; }
.canvas { flex: 1; min-width: 0; position: relative; border: 1px dashed #888; display: flex; }
.model { flex: 1; min-width: 0; width: 100%; height: 100%; }
.lbl { font: 9px "DejaVu Sans", sans-serif; text-anchor: middle; }
.axis { font: 12px "DejaVu Sans", sans-serif; text-anchor: middle; }
.cube { font: 14px "Liberation Serif", serif; text-anchor: middle; }
.notes { position: absolute; left: -1px; top: 0; margin: 0; font: bold 12px/14px "DejaVu Sans Condensed", "DejaVu Sans", sans-serif; white-space: nowrap; }
.status { position: absolute; right: 0; top: 0; width: 164px; height: 21px; display: flex; align-items: center; gap: 7px; padding-left: 1px; border-left: 5px solid #f0f0f0; background: #d5b88e; font-size: 13px; }

.finder { background: #fff; padding: 0 1px 0 0; }
.finder .pane-head { margin-left: 1px; }
.find-tabs { height: 23px; }
.find-tabs button { height: 20px; border-bottom: 1px solid #acacac; padding-bottom: 1px; }
.find-tabs button.on { height: 23px; border-bottom: 0; padding-bottom: 3px; }
.f1 { width: 162px; } .f2 { width: 186px; } .f3 { width: 135px; } .f4 { width: 144px; } .f5 { width: 151px; } .f6 { width: 81px; }
.grid { flex: 1; min-height: 0; margin: 1px 0 3px 2px; border: 1px solid #6f8fb0; display: flex; overflow: hidden; }
table { flex: 1; align-self: flex-start; border-collapse: separate; border-spacing: 0; table-layout: fixed; width: 100%; }
.c1 { width: 55px; } .c2 { width: 70px; } .c3 { width: 73px; } .c4 { width: 46px; } .c5 { width: 43px; } .c6 { width: 85px; } .c7 { width: 63px; } .c8 { width: 62px; }
th, td { padding: 0 0 0 3px; text-align: left; font-weight: 400; white-space: nowrap; border-right: 1px solid #ececea; border-bottom: 1px solid #ececea; height: 18px; line-height: 17px; }
th { height: 23px; padding-left: 4px; border-color: #dfe1e4; background: linear-gradient(#fff 40%, #f2f4f7); }
th:last-child, td:last-child { border-right: 0; }
.scroll { width: 17px; flex: none; margin-top: 24px; background: #f0f0f0; display: flex; flex-direction: column; align-items: center; padding: 5px 1px; }
.scroll i { width: 15px; height: 13px; margin: 6px 0 auto; background: #cdcdcd; }
.scroll svg { fill: none; stroke: #999; }

.statusbar { flex: none; height: 18px; background: #fff; display: flex; justify-content: space-between; align-items: center; padding: 0 14px 0 20px; }
```
